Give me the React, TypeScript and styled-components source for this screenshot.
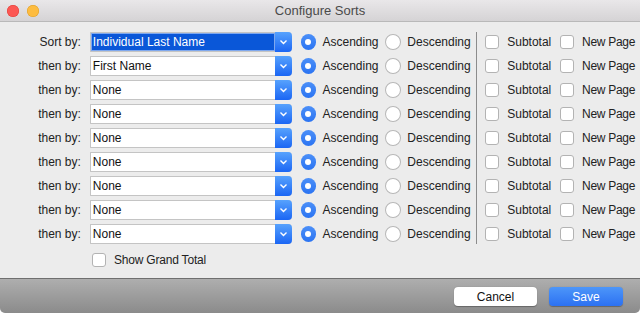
import React, { useState } from 'react';
import styled, { createGlobalStyle } from 'styled-components';

const GlobalStyle = createGlobalStyle`
  html, body {
    margin: 0;
    padding: 0;
    background: #ffffff;
  }
  body {
    font-family: 'Liberation Sans', Arial, sans-serif;
    font-size: 12px;
    color: #222;
  }
`;

const Window = styled.div`
  width: 640px;
  height: 313px;
  background: #ececec;
  display: flex;
  flex-direction: column;
  border-radius: 0 0 5px 5px;
  overflow: hidden;
`;

const TitleBar = styled.div`
  height: 21px;
  border-bottom: 1px solid #b9b9b9;
  background: linear-gradient(#e9e7e9, #d5d3d5);
  display: flex;
  align-items: center;
  position: relative;
  justify-content: center;
`;

const Lights = styled.div`
  position: absolute;
  left: 7px;
  top: 5px;
  display: flex;
  gap: 8px;
`;

const Light = styled.span<{ color: string; edge: string }>`
  width: 12px;
  height: 12px;
  border-radius: 50%;
  background: ${p => p.color};
  box-shadow: inset 0 0 0 0.5px ${p => p.edge};
`;

const Title = styled.div`
  font-size: 13px;
  color: #4a4a4a;
`;

const Content = styled.div`
  flex: 1;
  padding-top: 8px;
`;

const Row = styled.div`
  height: 24px;
  display: flex;
  align-items: center;
`;

const Label = styled.div`
  width: 81px;
  text-align: right;
  margin-right: 9px;
  font-size: 12px;
  color: #222;
`;

const Select = styled.div`
  width: 202px;
  height: 20px;
  box-sizing: border-box;
  display: flex;
  background: #fff;
  border: 1px solid #c4c4c4;
  border-right: none;
  border-radius: 1px 4px 4px 1px;
  margin-right: 9px;
`;

const SelectText = styled.div<{ focused?: boolean }>`
  flex: 1;
  display: flex;
  align-items: center;
  padding-left: 2px;
  font-size: 12px;
  color: ${p => (p.focused ? '#fff' : '#111')};
  background: ${p => (p.focused ? '#0a57d8' : 'transparent')};
  box-shadow: ${p => (p.focused ? 'inset 0 0 0 1px #7fa8ee' : 'none')};
`;

const Arrow = styled.div`
  width: 17px;
  margin: -1px 0;
  background: linear-gradient(#57a2fd, #1b66f4);
  border-radius: 0 4px 4px 0;
  display: flex;
  align-items: center;
  justify-content: center;
`;

const Radio = styled.span<{ checked?: boolean }>`
  width: 16px;
  height: 16px;
  box-sizing: border-box;
  border-radius: 50%;
  display: inline-flex;
  align-items: center;
  justify-content: center;
  background: ${p => (p.checked ? 'linear-gradient(#4b8ff8, #2b74f2)' : '#fff')};
  border: ${p => (p.checked ? 'none' : '1px solid #b7b7b7')};
  margin-right: 6px;
  &::after {
    content: '';
    display: ${p => (p.checked ? 'block' : 'none')};
    width: 6px;
    height: 6px;
    border-radius: 50%;
    background: #fff;
  }
`;

const OptionText = styled.span<{ width: number; tight?: boolean }>`
  width: ${p => p.width}px;
  font-size: 12px;
  color: #222;
  white-space: nowrap;
  letter-spacing: ${p => (p.tight ? '-0.3px' : '0')};
`;

const Divider = styled.div<{ first?: boolean; last?: boolean }>`
  align-self: stretch;
  width: 1px;
  background: #8c8c8c;
  margin: ${p => (p.first ? '2px' : '0')} 8px ${p => (p.last ? '2px' : '0')} 0;
`;

const Check = styled.span`
  width: 14px;
  height: 14px;
  box-sizing: border-box;
  border: 1px solid #b3b3b3;
  border-radius: 3px;
  background: #fff;
  margin-right: 8px;
  flex-shrink: 0;
`;

const GrandRow = styled.div`
  height: 22px;
  margin-top: 3px;
  padding-left: 92px;
  display: flex;
  align-items: center;
  font-size: 12px;
  letter-spacing: -0.2px;
  color: #222;
`;

const BottomBar = styled.div`
  height: 35px;
  border-top: 1px solid #6f6f6f;
  background: linear-gradient(#aeaeae, #8b8b8b);
  display: flex;
  align-items: flex-start;
  justify-content: flex-end;
  padding: 8px 17px 0 0;
  box-sizing: border-box;
  gap: 12px;
`;

const Button = styled.button<{ primary?: boolean }>`
  width: ${p => (p.primary ? 74 : 83)}px;
  height: 19px;
  border: none;
  border-radius: 4px;
  font-family: 'Liberation Sans', Arial, sans-serif;
  font-size: 12px;
  padding: 0;
  color: ${p => (p.primary ? '#fff' : '#111')};
  background: ${p => (p.primary ? 'linear-gradient(#4d96f9, #2c71f2)' : '#fff')};
  box-shadow: 0 0.5px 1px rgba(0, 0, 0, 0.3);
`;

const Chevron = () => (
  <svg width="9" height="6" viewBox="0 0 9 6">
    <path d="M1.5 1.5 L4.5 4.5 L7.5 1.5" stroke="#fff" strokeWidth="1.4" fill="none" />
  </svg>
);

const fields = [
  'Individual Last Name',
  'First Name',
  'None',
  'None',
  'None',
  'None',
  'None',
  'None',
  'None',
];

const App: React.FC = () => {
  const [values] = useState(fields);

  return (
    <>
      <GlobalStyle />
      <Window>
        <TitleBar>
          <Lights>
            <Light color="#fc5753" edge="#df3d37" />
            <Light color="#fdbc40" edge="#de9e27" />
          </Lights>
          <Title>Configure Sorts</Title>
        </TitleBar>
        <Content>
          {values.map((v, i) => (
            <Row key={i}>
              <Label>{i === 0 ? 'Sort by:' : 'then by:'}</Label>
              <Select>
                <SelectText focused={i === 0}>{v}</SelectText>
                <Arrow>
                  <Chevron />
                </Arrow>
              </Select>
              <Radio checked />
              <OptionText width={63}>Ascending</OptionText>
              <Radio />
              <OptionText width={69}>Descending</OptionText>
              <Divider first={i === 0} last={i === values.length - 1} />
              <Check />
              <OptionText width={53}>Subtotal</OptionText>
              <Check />
              <OptionText width={58} tight>New Page</OptionText>
            </Row>
          ))}
          <GrandRow>
            <Check />
            Show Grand Total
          </GrandRow>
        </Content>
        <BottomBar>
          <Button>Cancel</Button>
          <Button primary>Save</Button>
        </BottomBar>
      </Window>
    </>
  );
};

export default App;
